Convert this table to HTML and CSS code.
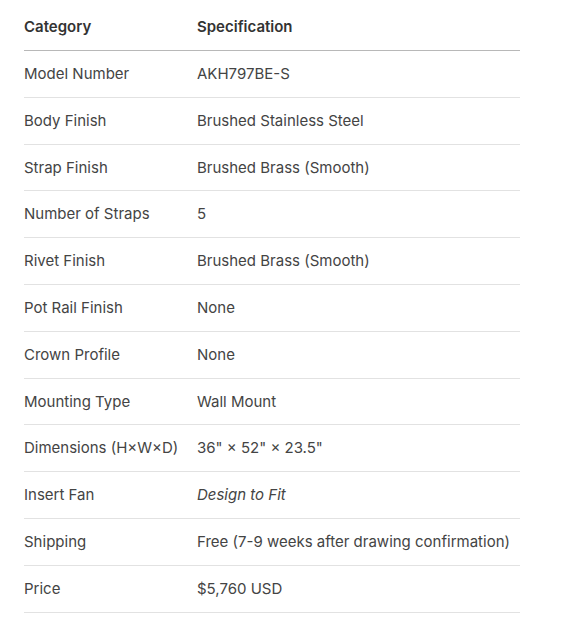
FILE: index.html
```html
<!DOCTYPE html>
<html>
<head>
<meta charset="utf-8">
<link rel="stylesheet" href="styles.css">
</head>
<body>
<table class="specs">
  <thead>
    <tr><th class="cat">Category</th><th>Specification</th></tr>
  </thead>
  <tbody>
    <tr><td>Model Number</td><td>AKH797BE-S</td></tr>
    <tr><td>Body Finish</td><td>Brushed Stainless Steel</td></tr>
    <tr><td>Strap Finish</td><td>Brushed Brass (Smooth)</td></tr>
    <tr><td>Number of Straps</td><td>5</td></tr>
    <tr><td>Rivet Finish</td><td>Brushed Brass (Smooth)</td></tr>
    <tr><td>Pot Rail Finish</td><td>None</td></tr>
    <tr><td>Crown Profile</td><td>None</td></tr>
    <tr><td>Mounting Type</td><td>Wall Mount</td></tr>
    <tr><td>Dimensions (H×W×D)</td><td>36" × 52" × 23.5"</td></tr>
    <tr><td>Insert Fan</td><td><em>Design to Fit</em></td></tr>
    <tr><td>Shipping</td><td>Free (7-9 weeks after drawing confirmation)</td></tr>
    <tr><td>Price</td><td>$5,760 USD</td></tr>
  </tbody>
</table>
</body>
</html>
```
FILE: styles.css
```css
html, body {
  margin: 0;
  padding: 0;
  background: #ffffff;
}
body {
  padding: 4px 24px 0;
  font-family: Inter, "Liberation Sans", sans-serif;
  font-size: 15px;
  color: #444444;
}
.specs {
  width: 496px;
  border-collapse: collapse;
  table-layout: fixed;
}
.specs th {
  text-align: left;
  font-weight: 600;
  color: #333333;
  padding: 12px 0;
  line-height: 22px;
  border-bottom: 1px solid #b8b8b8;
}
.specs th.cat {
  width: 173px;
}
.specs td {
  padding: 12px 0;
  line-height: 21.8px;
  border-bottom: 1px solid #e2e2e2;
  white-space: nowrap;
}
.specs em {
  font-style: italic;
}
```
